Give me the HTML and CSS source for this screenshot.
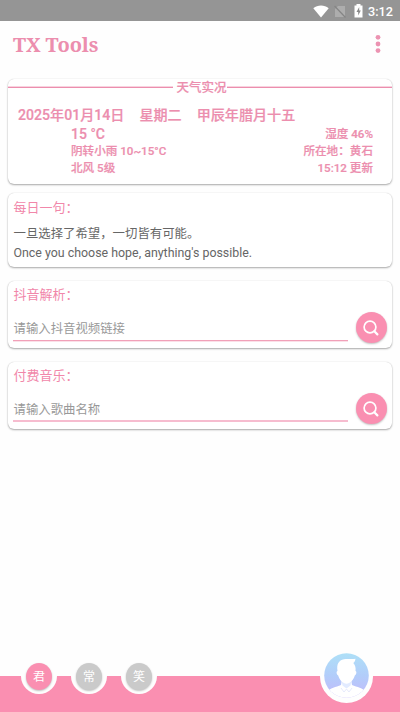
FILE: index.html
```html
<!DOCTYPE html>
<html lang="zh-CN">
<head>
<meta charset="utf-8">
<title>TX Tools</title>
<link rel="stylesheet" href="styles.css">
</head>
<body>
<div class="status">
  <svg width="16" height="13" viewBox="0 0 16 13"><path d="M.3 3.200C4.700-.5 11.300-.5 15.700 3.200L8 12.600Z" fill="#fff"/></svg>
  <svg class="sim" width="12" height="13" viewBox="0 0 12 13"><path d="M4 1h7v11H1V4Z" fill="#adadad"/><path d="M.5 1 11.500 12.500" stroke="#858585" stroke-width="1.200"/></svg>
  <svg class="battery" width="9" height="14" viewBox="0 0 9 14"><path d="M2.500 0h4v1.500H8.500V13.500H.5V1.500h2Z" fill="#fff"/><path d="M5.200 3 2.500 8h1.700v3.500L6.800 6.500H5.200Z" fill="#888"/></svg>
  <span class="clock">3:12</span>
</div>
<header class="appbar">
  <h1>TX Tools</h1>
  <svg width="6" height="20" viewBox="0 0 6 20" fill="#ec93b2"><circle cx="3" cy="3.300" r="2.400"/><circle cx="3" cy="10" r="2.400"/><circle cx="3" cy="16.600" r="2.400"/></svg>
</header>
<main>
  <section class="card weather">
    <h2 class="divider">天气实况</h2>
    <div class="date"><span>2025年01月14日</span><span>星期二</span><span>甲辰年腊月十五</span></div>
    <div class="row temp"><b>15 °C</b><span>湿度 46%</span></div>
    <div class="row"><span>阴转小雨 10~15°C</span><span>所在地：黄石</span></div>
    <div class="row wind"><span>北风 5级</span><span>15:12 更新</span></div>
  </section>
  <section class="card quote">
    <h3>每日一句：</h3>
    <p>一旦选择了希望，一切皆有可能。</p>
    <p class="english">Once you choose hope, anything's possible.</p>
  </section>
  <section class="card search">
    <h3>抖音解析：</h3>
    <div class="form">
      <div class="field">请输入抖音视频链接</div>
      <div class="go"><svg width="18" height="18" viewBox="0 0 18 18" fill="none" stroke="#fff"><circle cx="8" cy="8" r="5.900" stroke-width="1.700"/><path d="M12.300 12.300 15.400 15.400" stroke-width="2.200" stroke-linecap="round"/></svg></div>
    </div>
  </section>
  <section class="card search music">
    <h3>付费音乐：</h3>
    <div class="form">
      <div class="field">请输入歌曲名称</div>
      <div class="go"><svg width="18" height="18" viewBox="0 0 18 18" fill="none" stroke="#fff"><circle cx="8" cy="8" r="5.900" stroke-width="1.700"/><path d="M12.300 12.300 15.400 15.400" stroke-width="2.200" stroke-linecap="round"/></svg></div>
    </div>
  </section>
</main>
<nav class="bottom">
  <div class="tab active"><span>君</span></div>
  <div class="tab"><span>常</span></div>
  <div class="tab"><span>笑</span></div>
  <div class="avatar">
    <svg width="45" height="45" viewBox="0 0 45 45">
      <defs>
        <linearGradient id="sky" x1="0" y1="0" x2="0" y2="1"><stop offset="0" stop-color="#aee0f7"/><stop offset=".5" stop-color="#b2cdfa"/><stop offset="1" stop-color="#c3b9fb"/></linearGradient>
        <clipPath id="disc"><circle cx="22.500" cy="22.500" r="22.300"/></clipPath>
      </defs>
      <g clip-path="url(#disc)">
        <path d="M0 0h45v45H0z" fill="url(#sky)"/>
        <path d="M3 39c3-4 9-5 14-7l1-6h9l1 6c5 2 11 3 14 7v7H3Z" fill="#fff"/>
        <path d="M17.500 27.500q5 4 10 0l-1 5-4 3-4-3Z" fill="#e2ebff"/>
        <path d="M13.500 18c-1-7 1-10.500 6.500-11.700 4-1 7 .3 11.500-.5-.3 2-.8 3.200-2.200 4.200 2 2 2.700 5 2.200 8 1.500 0 1 4-.7 4.400-1 4-5 8.300-8.300 8.300s-7.300-4.300-8.300-8.300c-1.700-.4-2.200-4.400-.7-4.400Z" fill="#fff"/>
        <path d="m17 35 3 4 2.500-3 2.500 3 3-4" fill="none" stroke="#e0e5fa" stroke-width=".8"/>
      </g>
    </svg>
  </div>
</nav>
</body>
</html>
```
FILE: styles.css
```css
* { box-sizing: border-box; }
body {
  margin: 0;
  width: 400px;
  height: 712px;
  overflow: hidden;
  display: flex;
  flex-direction: column;
  background: #fefefe;
  color: #ec8eae;
  font-family: Roboto, "Noto Sans CJK SC", sans-serif;
}
svg { display: block; flex: none; }
h1, h2, h3, p { margin: 0; }
.status {
  height: 21px;
  flex: none;
  background: #959595;
  display: flex;
  align-items: center;
  justify-content: flex-end;
  padding: 1px 7px 0 0;
  color: #fff;
}
.sim { margin-left: 5px; }
.battery { margin-left: 8px; }
.clock { margin-left: 5px; width: 25px; font-size: 12.700px; font-weight: 500; line-height: 20px; padding-top: 1px; }
.appbar {
  height: 47px;
  flex: none;
  display: flex;
  align-items: center;
  justify-content: space-between;
  padding: 0 19px 0 13px;
}
.appbar svg { margin-top: -1px; }
h1 { font: bold 20px/28px "Noto Serif", "DejaVu Serif Condensed", "DejaVu Serif", serif; letter-spacing: -.15px; white-space: nowrap; }
main { flex: 1; padding: 11px 8px 0; }
.card {
  background: #fff;
  border-radius: 6px;
  box-shadow: 0 1px 2px rgba(0,0,0,.33), 0 0 1px rgba(0,0,0,.18);
  white-space: nowrap;
}
.weather {
  height: 105px;
  font-size: 11.600px;
  font-weight: 500;
  -webkit-text-stroke: .2px #ec8eae;
}
.divider {
  display: grid;
  grid-template-columns: 165px auto 165px;
  justify-content: space-between;
  align-items: center;
  height: 17px;
  padding-top: 1px;
  font-size: 12.500px;
  font-weight: 500;
  line-height: 16px;
  text-indent: 3px;
}
.divider::before, .divider::after {
  content: "";
  height: 1px;
  margin-top: -1px;
  background: #ec8eae;
  box-shadow: 0 -1px #f8d3df;
}
.date {
  display: flex;
  gap: 15px;
  padding-left: 10px;
  margin-top: 9px;
  font-size: 14.100px;
  line-height: 20px;
  height: 20px;
}
.row { display: flex; justify-content: space-between; padding: 0 19px 0 63px; height: 17px; line-height: 17px; }
.temp { height: 18px; line-height: 18px; }
.temp b { font-size: 14px; font-weight: 500; }
.wind { height: 16px; line-height: 16px; }
h3 { font-size: 13px; font-weight: 400; line-height: 20px; height: 20px; }
.quote { height: 74px; margin-top: 9px; padding: 5px 6px 0 5.500px; color: #666; font-size: 12.400px; }
.quote h3 { color: #f187aa; }
.quote p { height: 20px; line-height: 20px; margin-top: 6px; }
.quote .english { margin-top: -1px; }
.search { height: 67px; margin-top: 14px; padding: 4px 5px 0; }
.search h3 { color: #f187aa; padding-left: .5px; }
.form { display: flex; justify-content: space-between; padding-right: .5px; }
.field {
  width: 335px;
  height: 25px;
  margin-top: 11px;
  padding: 3px .5px 0;
  border-bottom: 1px solid #f1a0b8;
  box-shadow: 0 1px #fbe0e8;
  font-size: 12.400px;
  line-height: 20px;
  color: #999;
}
.go {
  width: 31px;
  height: 31px;
  margin-top: 7px;
  border-radius: 50%;
  background: #fa8fb1;
  box-shadow: 0 1px 2px rgba(0,0,0,.25);
  display: grid;
  place-items: center;
}
.music .field { border-bottom: 2px solid #f6bccf; box-shadow: none; }
.bottom {
  height: 36px;
  flex: none;
  display: flex;
  align-items: flex-start;
  gap: 14px;
  padding-left: 21px;
  background: #fa8fb1;
}
.tab {
  width: 36px;
  height: 36px;
  margin-top: -18px;
  padding: 5px;
  border-radius: 50%;
  background: #fefefe;
}
.tab span {
  display: block;
  width: 26px;
  height: 27px;
  border-radius: 50%;
  background: #cacaca;
  box-shadow: 0 1px 2px rgba(0,0,0,.25);
  color: #fff;
  font-size: 12px;
  line-height: 28px;
  text-align: center;
}
.tab.active span { background: #fa8fb1; }
.avatar {
  width: 53px;
  height: 53px;
  margin: -26px 27px 0 auto;
  border-radius: 50%;
  background: #fefefe;
  display: grid;
  place-items: center;
}
.avatar svg { margin-top: -2px; }
```
